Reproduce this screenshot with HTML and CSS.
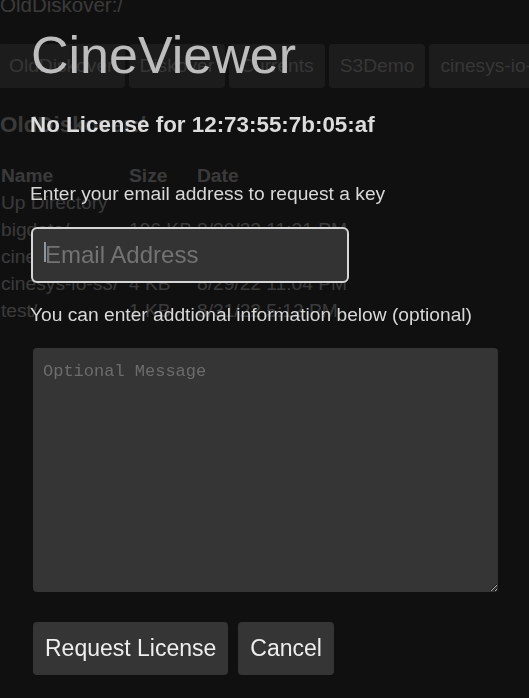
FILE: index.html
```html
<!DOCTYPE html>
<html lang="en">
<head>
<meta charset="utf-8">
<title>CineViewer</title>
<link rel="stylesheet" href="styles.css">
</head>
<body>
<div class="page">
  <div class="path">OldDiskover:/</div>
  <nav class="tabs">
    <span class="tab">OldDiskover</span>
    <span class="tab">Diskover</span>
    <span class="tab">Currents</span>
    <span class="tab">S3Demo</span>
    <span class="tab">cinesys-io-gcp</span>
  </nav>
  <h3 class="heading">OldDiskover:/</h3>
  <table class="files">
    <colgroup><col class="c-name"><col class="c-size"><col class="c-date"></colgroup>
    <thead><tr><th>Name</th><th>Size</th><th>Date</th></tr></thead>
    <tbody>
      <tr><td>Up Directory</td><td></td><td></td></tr>
      <tr><td>bigdata/</td><td>196 KB</td><td>8/30/22 11:31 PM</td></tr>
      <tr><td>cinedemo/</td><td>8 KB</td><td>8/29/22 10:12 PM</td></tr>
      <tr><td>cinesys-io-s3/</td><td>4 KB</td><td>8/29/22 11:04 PM</td></tr>
      <tr><td>test/</td><td>1 KB</td><td>8/31/22 5:12 PM</td></tr>
    </tbody>
  </table>
</div>

<div class="overlay">
  <div class="dialog">
    <h1 class="title">CineViewer</h1>
    <h3 class="status">No License for 12:73:55:7b:05:af</h3>
    <label class="label label-email" for="email">Enter your email address to request a key</label>
    <div class="field">
      <input id="email" class="email" type="text" placeholder="Email Address">
      <span class="caret"></span>
    </div>
    <label class="label label-msg" for="msg">You can enter addtional information below (optional)</label>
    <textarea id="msg" class="message" placeholder="Optional Message"></textarea>
    <div class="actions">
      <button class="btn" type="button">Request License</button>
      <button class="btn" type="button">Cancel</button>
    </div>
  </div>
</div>
</body>
</html>
```

FILE: styles.css
```css
html, body {
  margin: 0;
  padding: 0;
  background: #363636;
  overflow: hidden;
}

body {
  font-family: "Liberation Sans", Arial, sans-serif;
  color: #c4c4c4;
  width: 529px;
  height: 698px;
}

.page {
  font-size: 19.2px;
}

.path {
  font-size: 20.5px;
  line-height: 24px;
  margin-top: -7px;
  white-space: nowrap;
}

.tabs {
  display: flex;
  gap: 4px;
  margin: 27px 0 0 -2px;
  white-space: nowrap;
}

.tab {
  flex: none;
  background: #5e5e5e;
  color: #b4b4b4;
  line-height: 22px;
  padding: 11px 11px;
  border-radius: 4px;
}

.heading {
  font-size: 22.4px;
  line-height: 26px;
  margin: 24px 0 0 0;
}

.files {
  border-collapse: collapse;
  margin-top: 24px;
  table-layout: fixed;
  width: 100%;
}

.c-name { width: 128px; }
.c-size { width: 68px; }

.files th,
.files td {
  text-align: left;
  padding: 0 0 0 1px;
  line-height: 27px;
  white-space: nowrap;
  overflow: visible;
}

.files th { font-weight: bold; }

.overlay {
  position: fixed;
  inset: 0;
  background: rgba(0, 0, 0, 0.7);
}

.dialog {
  display: flex;
  flex-direction: column;
  align-items: flex-start;
  padding: 25px 0 0 30px;
  width: 470px;
}

.title {
  font-size: 52px;
  line-height: 60px;
  font-weight: normal;
  color: #bdbdbd;
  margin: 0 0 0 1px;
}

.status {
  font-size: 22.4px;
  line-height: 26px;
  font-weight: bold;
  color: #dcdcdc;
  margin: 26.5px 0 0 0;
}

.label {
  font-size: 19.2px;
  line-height: 22px;
  color: #d8d8d8;
}

.label-email { margin-top: 45.5px; }
.label-msg { margin-top: 21px; }

.field {
  position: relative;
  margin: 22px 0 0 1px;
}

.email {
  display: block;
  box-sizing: border-box;
  width: 318px;
  height: 56px;
  border: 2px solid #d6d6d6;
  border-radius: 6px;
  background: #333333;
  color: #eeeeee;
  font-family: "Liberation Sans", Arial, sans-serif;
  font-size: 24px;
  padding: 0 0 0 12px;
  outline: none;
}

.email::placeholder { color: #737373; }

.caret {
  position: absolute;
  left: 13px;
  top: 15px;
  width: 2px;
  height: 20px;
  background: #8a96a4;
}

.message {
  display: block;
  box-sizing: border-box;
  margin: 22px 0 0 3px;
  width: 465px;
  height: 244px;
  border: none;
  border-radius: 4px;
  background: #353535;
  color: #dddddd;
  font-family: "Liberation Mono", "DejaVu Sans Mono", monospace;
  font-size: 17px;
  line-height: 20px;
  padding: 14px 10px 10px;
  resize: both;
  outline: none;
}

.message::placeholder { color: #6c6c6c; }

.actions {
  display: flex;
  gap: 10px;
  margin: 30px 0 0 3px;
}

.btn {
  font-family: "Liberation Sans", Arial, sans-serif;
  font-size: 23px;
  line-height: 27px;
  color: #eeeeee;
  background: #353535;
  border: none;
  border-radius: 4px;
  padding: 13px 12px;
  cursor: pointer;
}
```
